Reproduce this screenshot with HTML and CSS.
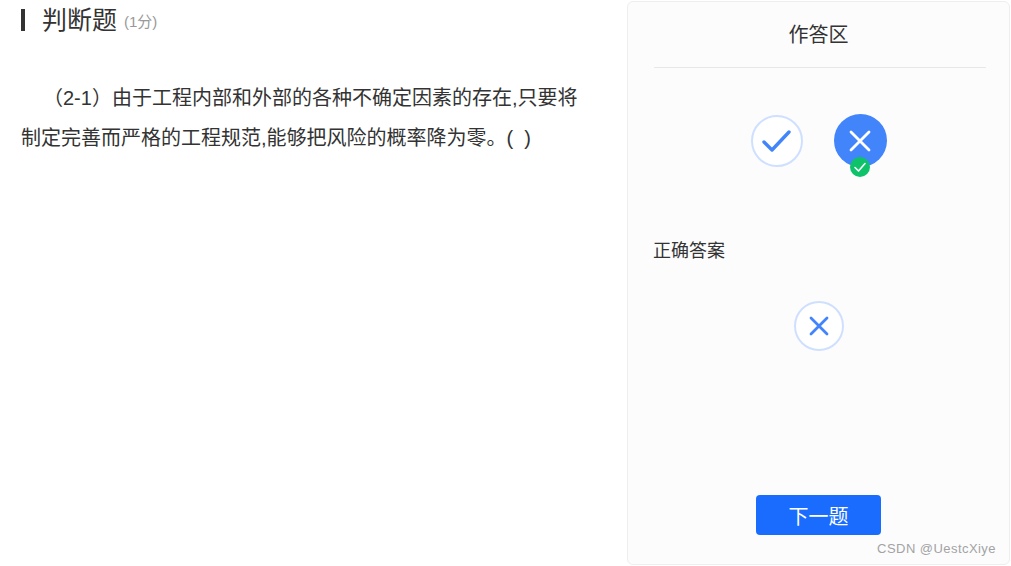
FILE: index.html
```html
<!DOCTYPE html>
<html lang="zh-CN">
<head>
    <meta charset="UTF-8">
    <title>判断题</title>
    <link rel="stylesheet" href="styles.css">
</head>
<body>
    <div class="page">
        <div class="question">
            <div class="heading">
                <span class="heading-bar"></span>
                <h1>判断题</h1>
                <span class="score">(1分)</span>
            </div>
            <p class="stem">（2-1）由于工程内部和外部的各种不确定因素的存在,只要将制定完善而严格的工程规范,能够把风险的概率降为零。(&nbsp;&nbsp;)</p>
        </div>
        <div class="panel">
            <div class="panel-title">作答区</div>
            <div class="choices">
                <div class="circle">
                    <svg width="32" height="26" viewBox="0 0 32 26"><path class="stroke" d="M3 14 L11 22 L28 4" stroke-width="3.4"/></svg>
                </div>
                <div class="circle circle-on">
                    <svg width="24" height="24" viewBox="0 0 24 24"><path class="stroke stroke-white" d="M3 3 L21 21 M21 3 L3 21" stroke-width="2.8"/></svg>
                    <span class="badge">
                        <svg width="14" height="12" viewBox="0 0 14 12"><path class="stroke stroke-white" d="M2 6.5 L5.5 10 L12 2.5" stroke-width="1.6"/></svg>
                    </span>
                </div>
            </div>
            <div class="answer-label">正确答案</div>
            <div class="answer">
                <div class="circle circle-small">
                    <svg width="22" height="22" viewBox="0 0 22 22"><path class="stroke" d="M3 3 L19 19 M19 3 L3 19" stroke-width="2.8"/></svg>
                </div>
            </div>
            <div class="panel-foot">
                <button class="next-btn">下一题</button>
            </div>
        </div>
    </div>
    <div class="watermark">CSDN @UestcXiye</div>
</body>
</html>
```
FILE: styles.css
```css
html, body {
    margin: 0;
    padding: 0;
    height: 100%;
    overflow: hidden;
}
body {
    font-family: "Liberation Sans", "Noto Sans CJK SC", sans-serif;
    color: #333;
    background-color: #fff;
}
.page {
    display: flex;
    height: 566px;
    padding: 1px 1px 1px 21px;
    box-sizing: border-box;
}
.question {
    flex: 1;
    padding-right: 46px;
}
.heading {
    display: flex;
    align-items: center;
    height: 36px;
}
.heading-bar {
    width: 4px;
    height: 22px;
    margin-top: 2px;
    background-color: #333;
}
.heading h1 {
    margin: 0 0 2px 17px;
    font-size: 25px;
    font-weight: 400;
}
.score {
    margin: 2px 0 0 7px;
    font-size: 15px;
    color: #999;
}
.stem {
    margin: 41px 0 0;
    font-size: 20px;
    line-height: 40px;
    text-indent: 22px;
}
.panel {
    display: flex;
    flex-direction: column;
    width: 383px;
    box-sizing: border-box;
    padding: 0 25px 29px;
    background-color: #fcfcfd;
    border: 1px solid #eee;
    border-radius: 6px;
}
.panel-title {
    height: 65px;
    margin: 0 -2px 0 1px;
    padding-right: 3px;
    line-height: 66px;
    font-size: 20px;
    text-align: center;
    border-bottom: 1px solid #e8e8e8;
}
.choices {
    display: flex;
    justify-content: center;
    align-items: center;
    gap: 31px;
    margin-top: 46px;
}
.circle {
    position: relative;
    display: flex;
    justify-content: center;
    align-items: center;
    width: 52px;
    height: 52px;
    box-sizing: border-box;
    background-color: #fff;
    border: 2px solid #cfe0ff;
    border-radius: 50%;
}
.circle-on {
    width: 53px;
    height: 53px;
    background-color: #4285fb;
    border: none;
}
.circle-small {
    width: 50px;
    height: 50px;
}
.stroke {
    fill: none;
    stroke: #4285fb;
    stroke-linecap: round;
    stroke-linejoin: round;
}
.stroke-white {
    stroke: #fff;
}
.badge {
    position: absolute;
    left: 16px;
    top: 43px;
    display: flex;
    justify-content: center;
    align-items: center;
    width: 20px;
    height: 20px;
    background-color: #0ec26a;
    border-radius: 50%;
}
.answer-label {
    margin-top: 71px;
    font-size: 18px;
    line-height: 26px;
}
.answer {
    display: flex;
    justify-content: center;
    margin-top: 37px;
}
.panel-foot {
    display: flex;
    justify-content: center;
    margin-top: auto;
}
.next-btn {
    width: 125px;
    height: 40px;
    padding: 0;
    font-family: inherit;
    font-size: 20px;
    color: #fff;
    background-color: #1a6cff;
    border: none;
    border-radius: 4px;
}
.watermark {
    position: absolute;
    right: 15px;
    top: 541px;
    font-size: 13px;
    letter-spacing: 0.45px;
    color: #a3a3a3;
}
```
